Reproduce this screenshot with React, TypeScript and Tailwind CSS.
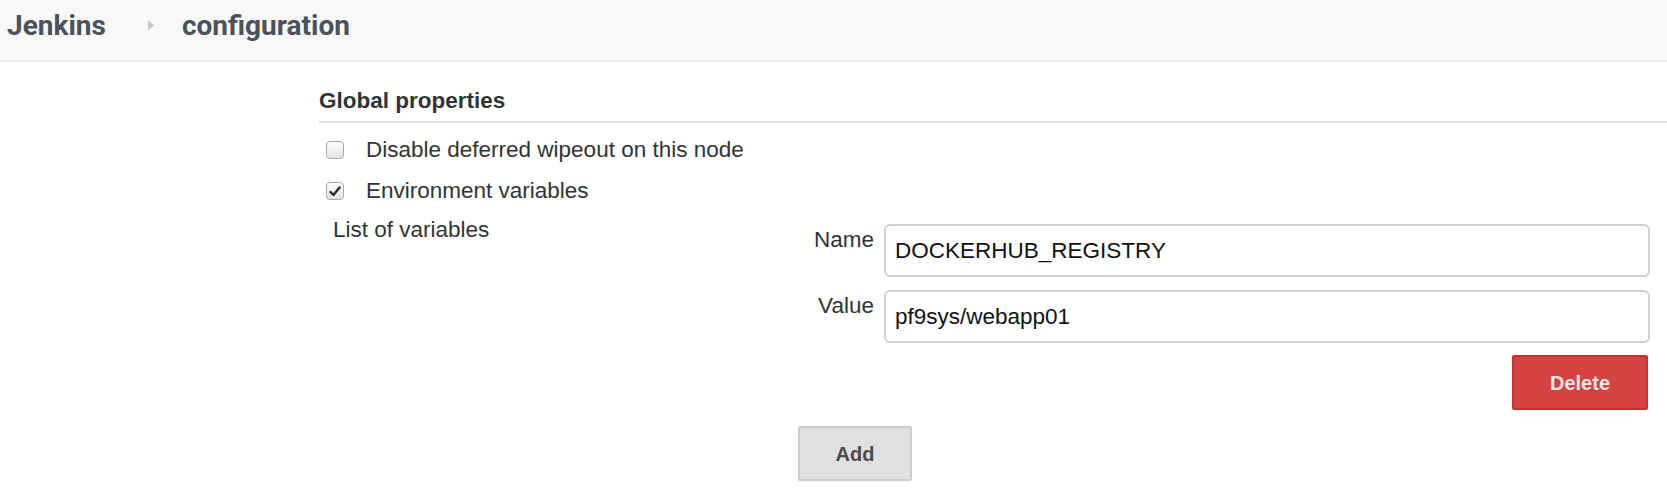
import React from "react"

function Box({ checked }: { checked?: boolean }) {
    return (
        <span className="relative flex h-[18px] w-[18px] shrink-0 items-center justify-center rounded-[4px] border border-[#a9a9a9] bg-gradient-to-b from-white to-[#e2e2e2] shadow-[inset_0_1px_0_#fff]">
            {checked && (
                <svg width="12" height="11" viewBox="0 0 12 11">
                    <path d="M1.5 6 L4.5 9 L10.5 1.5" fill="none" stroke="#2b2b2b" strokeWidth="2.4" strokeLinecap="round" strokeLinejoin="round" />
                </svg>
            )}
        </span>
    )
}

function Check({ label, checked, className }: { label: string, checked?: boolean, className?: string }) {
    return (
        <label className={"flex items-center leading-[26px] " + (className ?? "")}>
            <span className="ml-[7px] mr-[22px] flex">
                <Box checked={checked} />
            </span>
            <span>{label}</span>
        </label>
    )
}

function Field({ name, value, className }: { name: string, value: string, className?: string }) {
    return (
        <div className={"flex " + (className ?? "")}>
            <div className="w-[76px] shrink-0 pt-[3px] text-right leading-[26px]">{name}</div>
            <input
                readOnly
                defaultValue={value}
                className="ml-[10px] h-[53px] flex-1 rounded-[6px] border-2 border-[#cfcfcf] bg-white px-[9px] text-[22.5px] text-[#111] outline-none"
                style={{ fontFamily: "'Liberation Sans', Arial, sans-serif" }}
            />
        </div>
    )
}

export default function App() {
    return (
        <div className="min-h-[503px] w-full bg-white text-[22.5px] text-[#333]" style={{ fontFamily: "'Liberation Sans', Arial, sans-serif" }}>
            <div className="flex h-[62px] items-center border-b-2 border-[#e9edf1] bg-[#f8f8f8] pb-[9px] pl-[7px]">
                <div className="flex items-center text-[28px] font-bold leading-[33px] text-[#4b525b]" style={{ fontFamily: "Roboto, 'Liberation Sans', sans-serif" }}>
                    <span>Jenkins</span>
                    <svg className="ml-[42px]" width="7" height="11" viewBox="0 0 7 11">
                        <polygon points="0,0 6,5.5 0,11" fill="#c6c6c6" />
                    </svg>
                    <span className="ml-[27px]">configuration</span>
                </div>
            </div>

            <div className="pl-[319px]">
                <div className="mt-[26px] border-b-2 border-[#dedede] pb-[7px] font-bold leading-[26px]">Global properties</div>

                <Check className="mt-[14px]" label="Disable deferred wipeout on this node" />
                <Check className="mt-[15px]" label="Environment variables" checked />

                <div className="mt-[6px] flex pr-[17px]">
                    <div className="ml-[14px] w-[465px] shrink-0 pt-[7px] leading-[26px]">List of variables</div>
                    <div className="flex-1 pt-[14px]">
                        <Field name="Name" value="DOCKERHUB_REGISTRY" />
                        <Field name="Value" value="pf9sys/webapp01" className="mt-[13px]" />
                        <div className="mt-[12px] flex justify-end pr-[2px]">
                            <button className="h-[55px] w-[136px] rounded-[2px] border-2 border-[#c23434] bg-[#d44242] text-[20px] font-bold text-[#f4e6e6]">
                                Delete
                            </button>
                        </div>
                        <button className="mt-[16px] h-[55px] w-[114px] rounded-[2px] border-2 border-[#cbcbcb] bg-[#e0e0e0] text-[20px] font-bold text-[#4a4a4a]">
                            Add
                        </button>
                    </div>
                </div>
            </div>
        </div>
    )
}
